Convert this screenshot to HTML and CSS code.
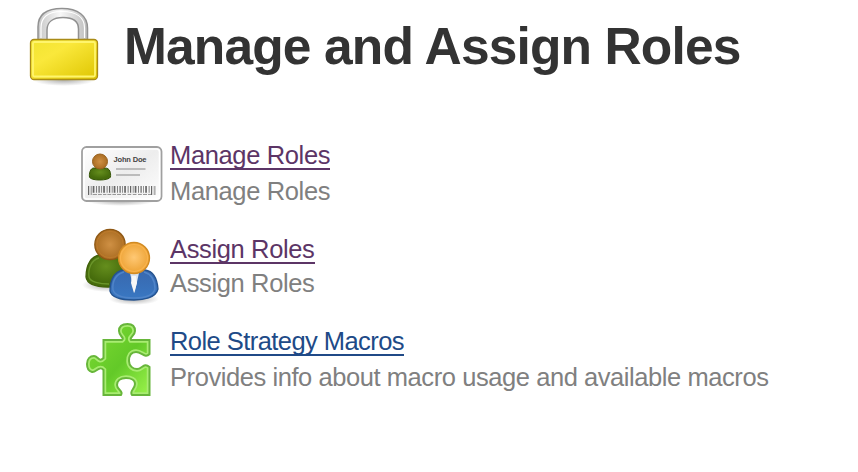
FILE: index.html
```html
<!DOCTYPE html>
<html lang="en">
<head>
<meta charset="utf-8">
<title>Manage and Assign Roles</title>
<link rel="stylesheet" href="styles.css">
</head>
<body>
<header class="page-header">
  <svg class="lock" viewBox="20 0 90 95" aria-hidden="true">
    <defs>
      <linearGradient id="gold" x1="0" y1="0" x2="1" y2="1"><stop stop-color="#f1e431"/><stop offset=".35" stop-color="#fae83b"/><stop offset="1" stop-color="#dec500"/></linearGradient>
      <linearGradient id="metal"><stop stop-color="#c7c7c7"/><stop offset=".45" stop-color="#f8f8f8"/><stop offset="1" stop-color="#bdbdbd"/></linearGradient>
      <radialGradient id="shade"><stop stop-color="#777" stop-opacity=".6"/><stop offset="1" stop-color="#777" stop-opacity="0"/></radialGradient>
    </defs>
    <ellipse cx="64" cy="80" rx="31" ry="6" fill="url(#shade)"/>
    <path d="M38 42V27C38 15 46 8.500 62 8.500S87.500 16 87.500 28V42H78.500V29C78.500 21 73 17.500 63 17.500S47 22 47 30V42Z" fill="url(#metal)" stroke="#919191" stroke-width="1.500"/>
    <path d="M41 38V28C41 17 48 11.500 62 11.500S84.500 17 84.500 28V38" fill="none" stroke="#fff" stroke-width="1.200"/>
    <rect x="30.500" y="39.500" width="67" height="40" rx="3.500" fill="url(#gold)" stroke="#a98b17" stroke-width="1.300"/>
    <rect x="33" y="42" width="62" height="34.500" rx="1.500" fill="none" stroke="#fff56c" stroke-width="1.800"/>
  </svg>
  <h1>Manage and Assign Roles</h1>
</header>
<main class="tasks">
  <section class="task">
    <svg class="icon" viewBox="75 135 95 90" aria-hidden="true">
      <defs>
        <linearGradient id="card" x1="0" y1="0" x2="1" y2="1"><stop stop-color="#fff"/><stop offset=".5" stop-color="#ededed"/><stop offset="1" stop-color="#fff"/></linearGradient>
        <radialGradient id="brown"><stop stop-color="#cf9044"/><stop offset="1" stop-color="#aa6d22"/></radialGradient>
        <radialGradient id="green" cy=".35"><stop stop-color="#658e1d"/><stop offset="1" stop-color="#466c0c"/></radialGradient>
      </defs>
      <ellipse cx="121" cy="201" rx="34" ry="5" fill="url(#shade)"/>
      <rect x="82" y="147" width="79.500" height="54" rx="4.500" fill="url(#card)" stroke="#a0a0a0" stroke-width="1.800"/>
      <rect x="84" y="149" width="75.500" height="50" rx="3" fill="none" stroke="#fff" stroke-width="1.500"/>
      <path d="M94 168C90 168 89 174 89.500 177C90 181 109 181 110.500 177C111 173 110 168 105 168Z" fill="url(#green)" stroke="#365508"/>
      <circle cx="100" cy="161.500" r="7.500" fill="url(#brown)" stroke="#99621e"/>
      <text class="card-name" x="113.500" y="162" textLength="33">John Doe</text>
      <path d="M116 169H145.500M116 175H140" stroke="#bcbcbc" stroke-width="2"/>
      <path d="M88 190.500H156" stroke="#666" stroke-width="9" stroke-dasharray="1.200 1.600 .7 1.200 1.700 1.800 .8 1.500"/>
      <path d="M92 193.500H151" stroke="#eee" stroke-width="1.500"/>
      <path d="M93 194.500H151" stroke="#999" stroke-width="1.200" stroke-dasharray="3 2"/>
    </svg>
    <div class="task-text"><a class="visited" href="#">Manage Roles</a><p>Manage Roles</p></div>
  </section>
  <section class="task task-assign">
    <svg class="icon" viewBox="75 220 95 90" aria-hidden="true">
      <defs>
        <radialGradient id="orange" cx=".5" cy=".48"><stop stop-color="#ffc874"/><stop offset="1" stop-color="#eda335"/></radialGradient>
        <linearGradient id="blue" x1="0" y1="0" x2="0" y2="1"><stop stop-color="#3868ae"/><stop offset="1" stop-color="#3978c3"/></linearGradient>
      </defs>
      <ellipse cx="107" cy="285" rx="25" ry="7" fill="url(#shade)"/>
      <ellipse cx="134" cy="299" rx="25" ry="6" fill="url(#shade)"/>
      <path d="M100 255C91 256 86 265 86 277C87 285 98 287 108 287S126 285 126 276C126 262 119 255 111 255Z" fill="url(#green)" stroke="#406109" stroke-width="1.300"/>
      <path d="M99 258C91 260 88 269 89 277C90 282 100 284 109 284" fill="none" stroke="#6b962b" stroke-width="1.300"/>
      <circle cx="110" cy="244.500" r="15.200" fill="url(#brown)" stroke="#8f5814" stroke-width="1.300"/>
      <circle cx="110" cy="244.500" r="13.200" fill="none" stroke="#bd7a2c"/>
      <path d="M123 270C115 272 110 279 110 291C112 299 125 300 134 300S156 298 158 289C157 277 152 271 145 270Z" fill="url(#blue)" stroke="#245390" stroke-width="1.300"/>
      <path d="M124 272C116 274 112 281 113 290C115 296 124 298 134 298S153 296 155 289C155 280 151 274 144 272" fill="none" stroke="#4f84c8" stroke-width="1.500"/>
      <path d="M130 273H139L134.500 293Z" fill="#d9e4f3"/>
      <path d="M132 276H136L137 283L134 293L131 283Z" fill="#f7f7f7"/>
      <circle cx="134" cy="258" r="15.500" fill="url(#orange)" stroke="#d18a22" stroke-width="1.300"/>
      <circle cx="134" cy="258" r="13.500" fill="none" stroke="#f9b34d" stroke-width="1.200"/>
    </svg>
    <div class="task-text"><a class="visited" href="#">Assign Roles</a><p>Assign Roles</p></div>
  </section>
  <section class="task task-macros">
    <svg class="icon" viewBox="75 315 95 90" aria-hidden="true">
      <defs>
        <linearGradient id="puzzle" x1="0" y1="0" x2="1" y2="1"><stop stop-color="#7fdb34"/><stop offset=".55" stop-color="#63c928"/><stop offset="1" stop-color="#9bf34c"/></linearGradient>
        <clipPath id="piece-clip"><use href="#piece"/></clipPath>
        <path id="piece" d="M103.500 340H122C125 338 119 336 119 331C119 326 123 324 127.500 324S135 326 135 331C135 336 129 337 131 340H149.500V354C145 359 142 352 136 352C131 352 129 356 129 361C129 366 133 369 137 369C142 369 144 362 149.500 367V395H132C129 391 135 389 135 384C135 380 131 378 126 378C120 378 117 381 117 385C117 390 124 391 121 395H103.500V370C99 365 96 373 92 372C88 371 87 368 87 364C87 359 90 356 94 356C98 356 99 363 103.500 358Z"/>
      </defs>
      <use href="#piece" fill="url(#puzzle)"/>
      <g clip-path="url(#piece-clip)"><use href="#piece" fill="none" stroke="#a9ec72" stroke-width="5.500"/></g>
      <use href="#piece" fill="none" stroke="#67b63a" stroke-width="2"/>
    </svg>
    <div class="task-text"><a class="macros-link" href="#">Role Strategy Macros</a><p class="macros-info">Provides info about macro usage and available macros</p></div>
  </section>
</main>
</body>
</html>
```
FILE: styles.css
```css
body {
  margin: 0;
  background: #fff;
  color: #333;
  font: 25.500px/30px "Liberation Sans", Arial, sans-serif;
}
.page-header {
  display: flex;
  height: 95px;
  padding-left: 20px;
}
.lock {
  width: 90px;
  height: 95px;
  flex: none;
}
h1 {
  margin: 16px 0 0 14px;
  font-size: 51.500px;
  line-height: 60px;
  letter-spacing: -.86px;
  white-space: nowrap;
}
.tasks {
  display: grid;
  grid-template-rows: 90px 90px 90px;
  row-gap: 3px;
  padding: 40px 0 0 75px;
}
.task {
  display: flex;
}
.icon {
  width: 95px;
  height: 90px;
  flex: none;
}
.task-assign .icon {
  margin-top: -8px;
}
.task-macros .icon {
  margin-top: -6px;
}
.task-text {
  padding-top: 5px;
  white-space: nowrap;
  letter-spacing: -.36px;
}
.task-assign .task-text {
  padding-top: 6px;
}
.task a {
  display: block;
  width: max-content;
  height: 28px;
  overflow: hidden;
  border-bottom: 2px solid;
  color: #204a87;
  text-decoration: none;
}
.task a.visited {
  color: #5c3566;
}
.task a.macros-link {
  letter-spacing: -.56px;
}
.task p {
  margin: 6px 0 0;
  color: #808080;
}
.task-assign p {
  margin-top: 4px;
}
.task p.macros-info {
  letter-spacing: -.43px;
}
.card-name {
  font-size: 7.500px;
  font-weight: bold;
  fill: #444;
  letter-spacing: 0;
}
```
